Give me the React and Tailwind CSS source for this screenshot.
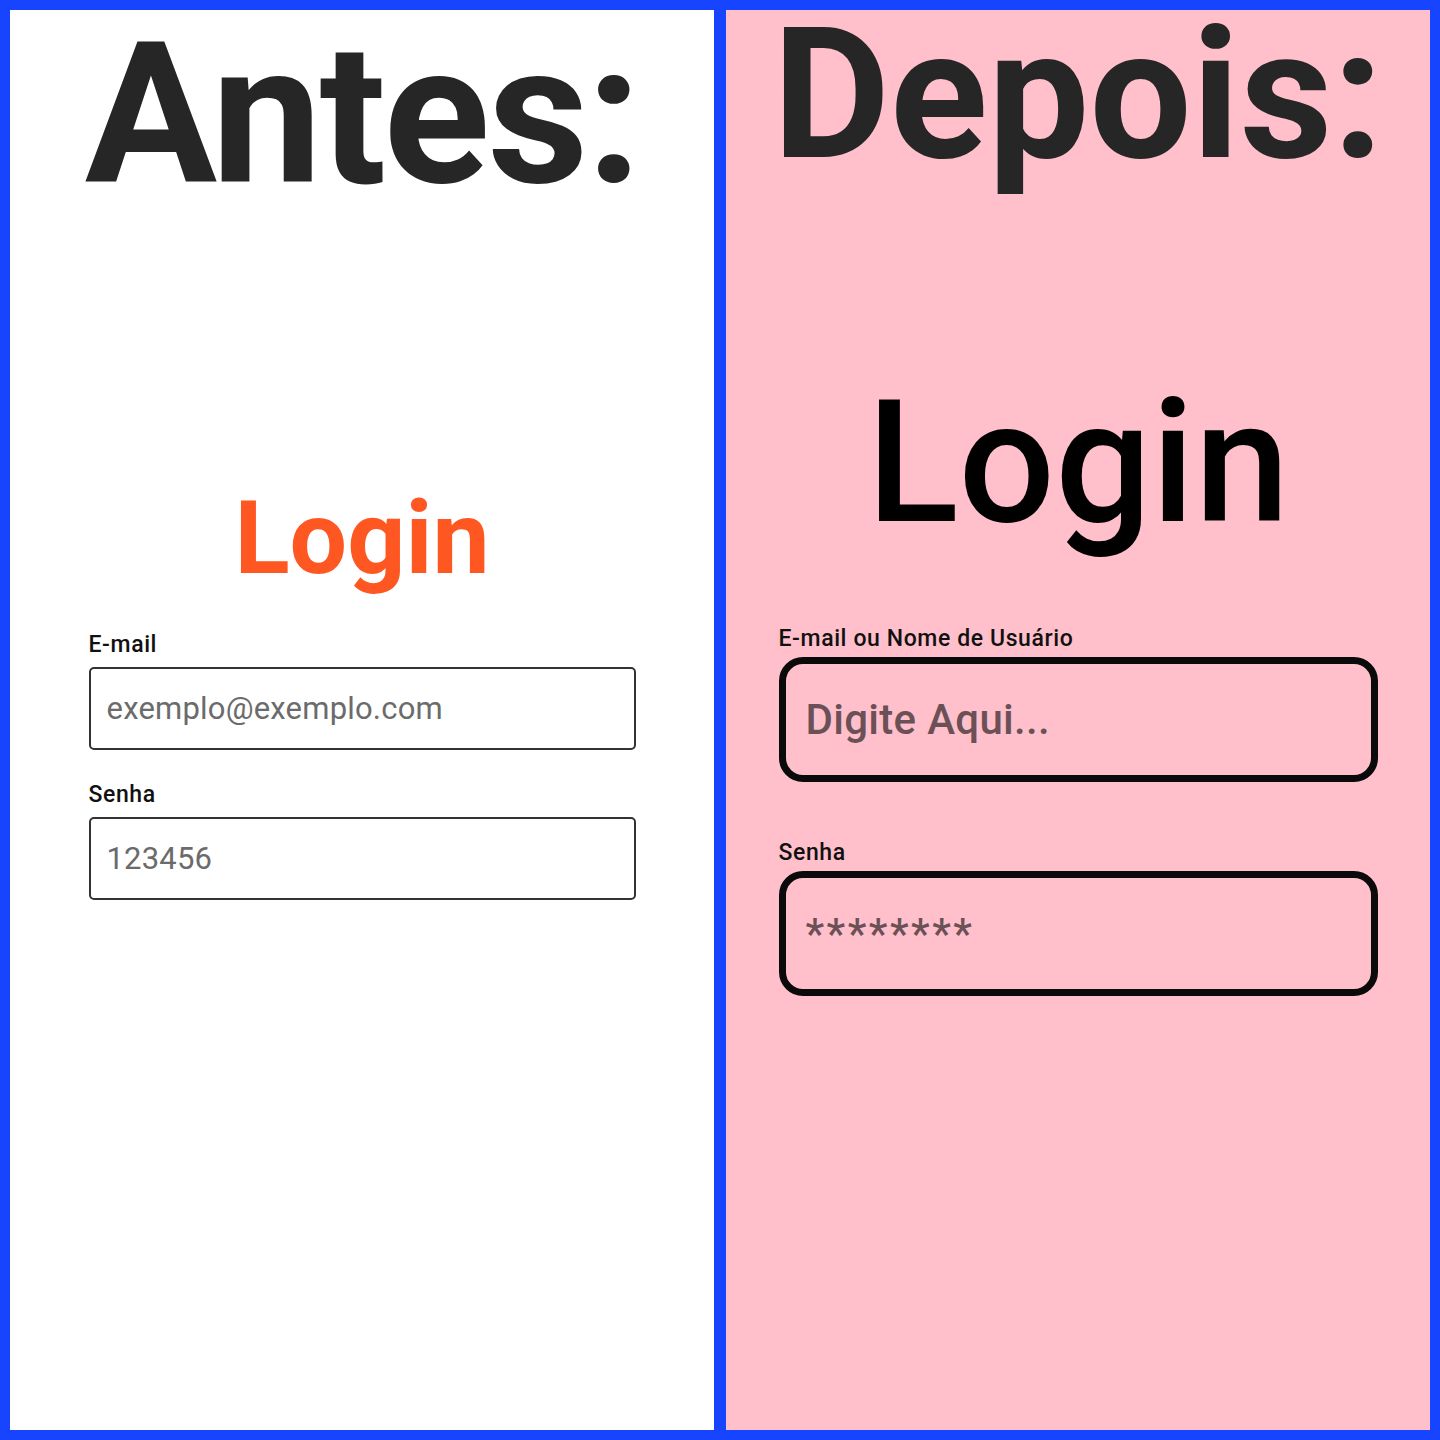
import React from "react";

const font = { fontFamily: "Roboto, 'Noto Sans', sans-serif" };

function OldField({ label, placeholder, className = "" }) {
  return (
    <div className={className}>
      <label className="block text-[23px] leading-none font-medium tracking-[0.6px] text-[#111]">
        {label}
      </label>
      <input
        type="text"
        placeholder={placeholder}
        className="mt-[11px] block w-full h-[83px] border-2 border-[#333] rounded-[5px] bg-white pl-[16px] text-[31px] tracking-[0.2px] text-[#555] placeholder:text-[#6b6b6b] outline-none"
      />
    </div>
  );
}

function NewField({ label, placeholder, className = "", inputClass = "" }) {
  return (
    <div className={className}>
      <label className="block text-[23px] leading-none font-medium tracking-[0.6px] text-[#111]">
        {label}
      </label>
      <input
        type="text"
        placeholder={placeholder}
        className={
          "mt-[7px] block w-full h-[125px] border-[7px] border-[#0a0a0a] rounded-[24px] bg-transparent pl-[20px] text-[42px] font-medium text-[#6b5157] placeholder:text-[#6b5157] outline-none " +
          inputClass
        }
      />
    </div>
  );
}

export default function App() {
  return (
    <div
      className="w-[1440px] h-[1440px] bg-[#1745ff] p-[10px] flex gap-[12px]"
      style={font}
    >
      {/* antes */}
      <div className="w-[704px] h-full bg-white flex flex-col items-center">
        <h1 className="mt-[6px] text-[197px] leading-none font-bold tracking-[-2.5px] text-[#262626]">
          Antes:
        </h1>
        <h2 className="mt-[274px] text-[102px] leading-none font-bold text-[#ff5722]">
          Login
        </h2>
        <div className="w-[547px] mt-[44px]">
          <OldField label="E-mail" placeholder="exemplo@exemplo.com" />
          <OldField
            className="mt-[33px]"
            label="Senha"
            placeholder="123456"
          />
        </div>
      </div>

      {/* depois */}
      <div className="w-[704px] h-full bg-[#ffc0cb] flex flex-col items-center">
        <h1 className="text-[181px] leading-[0.94] font-bold text-[#262626]">
          Depois:
        </h1>
        <h2 className="mt-[198px] text-[170px] leading-none font-medium text-black">
          Login
        </h2>
        <div className="w-[599px] mt-[79px]">
          <NewField
            label="E-mail ou Nome de Usuário"
            placeholder="Digite Aqui..."
            inputClass="tracking-[0.3px]"
          />
          <NewField
            className="mt-[59px]"
            label="Senha"
            placeholder="********"
            inputClass="tracking-[2.5px]"
          />
        </div>
      </div>
    </div>
  );
}
